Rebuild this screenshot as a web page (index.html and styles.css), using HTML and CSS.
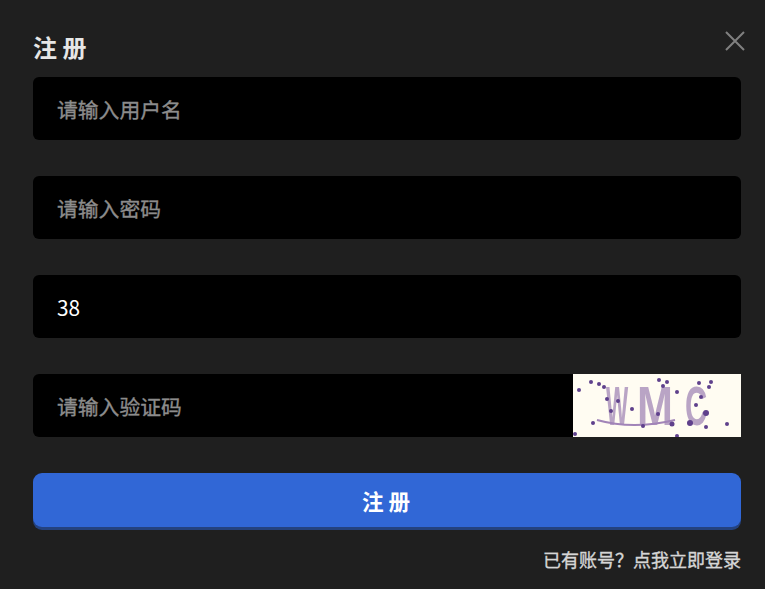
FILE: index.html
```html
<!DOCTYPE HTML>
<html lang="zh-CN">
	<head>
		<meta charset="utf-8">
		<title>注册</title>
		<link rel="stylesheet" href="styles.css">
	</head>
	<body>
		<div class="register-dialog">
			<button class="close-button" type="button" aria-label="关闭">
				<svg width="22" height="22" viewBox="0 0 22 22">
					<path d="M2 2 L20 20 M20 2 L2 20" stroke="#808080" stroke-width="2" fill="none"/>
				</svg>
			</button>

			<h2 class="register-title">注 册</h2>

			<form class="register-form">
				<input class="field" type="text" placeholder="请输入用户名">
				<input class="field" type="text" placeholder="请输入密码">
				<input class="field" type="text" value="38">
				<div class="captcha-row">
					<input class="field" type="text" placeholder="请输入验证码">
					<svg class="captcha" width="168" height="63" viewBox="0 0 168 63">
						<defs>
							<filter id="soften"><feGaussianBlur stdDeviation="0.7"/></filter>
						</defs>
						<rect width="168" height="63" fill="#fffcf2"/>
						<g filter="url(#soften)">
							<g class="captcha-text">
								<text transform="translate(33 50.5) scale(0.42 1)">W</text>
								<text transform="translate(64 50.5) scale(0.77 1)">M</text>
								<text transform="translate(112 50.5) scale(0.55 1)">C</text>
							</g>
							<path d="M24 46 Q60 56 102 46" stroke="#a184b8" stroke-width="2" fill="none"/>
							<g fill="#5e3f8c">
								<circle cx="6" cy="16" r="2"/><circle cx="18" cy="8" r="2"/><circle cx="26" cy="10" r="2"/>
								<circle cx="31" cy="13" r="2"/><circle cx="34" cy="25" r="2"/><circle cx="45" cy="27" r="2"/>
								<circle cx="38" cy="37" r="2"/><circle cx="59" cy="35" r="2"/><circle cx="20" cy="49" r="2"/>
								<circle cx="70" cy="52" r="2"/><circle cx="85" cy="40" r="2"/><circle cx="99" cy="50" r="2.5"/>
								<circle cx="86" cy="6" r="2"/><circle cx="94" cy="8" r="2"/><circle cx="90" cy="12" r="2"/>
								<circle cx="104" cy="18" r="2"/><circle cx="126" cy="9" r="2"/><circle cx="138" cy="8" r="2"/>
								<circle cx="136" cy="13" r="2"/><circle cx="128" cy="23" r="2"/><circle cx="123" cy="31" r="2"/>
								<circle cx="133" cy="39" r="3"/><circle cx="117" cy="49" r="3"/><circle cx="133" cy="53" r="2"/>
								<circle cx="154" cy="50" r="2"/><circle cx="2" cy="60" r="2"/><circle cx="104" cy="62" r="2"/>
							</g>
						</g>
					</svg>
				</div>
				<button class="submit-button" type="button">注 册</button>
			</form>

			<a class="login-link" href="#">已有账号？点我立即登录</a>
		</div>
	</body>
</html>
```

FILE: styles.css
```css
* {
	box-sizing: border-box;
}

html,
body {
	background: #1f1f1f;
	height: 100%;
	margin: 0;
	overflow: hidden;
}

body {
	font-family: "Noto Sans CJK SC", "Noto Sans", sans-serif;
}

.register-dialog {
	padding: 29px 24px 0 33px;
	position: relative;
}

.close-button {
	background: none;
	border: none;
	height: 22px;
	padding: 0;
	position: absolute;
	right: 19px;
	top: 30px;
	width: 22px;
}

.close-button svg {
	display: block;
}

.register-title {
	color: #e6e6e6;
	font-size: 24px;
	font-weight: 700;
	line-height: 36px;
	margin: 0 0 12px;
}

.register-form {
	display: flex;
	flex-direction: column;
	gap: 36px;
}

.field {
	background: #000;
	border: none;
	border-radius: 6px;
	color: #fff;
	display: block;
	font-family: inherit;
	font-size: 20.8px;
	font-weight: 400;
	height: 63px;
	outline: none;
	padding: 0 24px;
	width: 100%;
}

.field::placeholder {
	color: #8c8c8c;
	opacity: 1;
	-webkit-text-stroke: 0.35px #8c8c8c;
}

.captcha-row {
	height: 63px;
	position: relative;
}

.captcha {
	display: block;
	position: absolute;
	right: 0;
	top: 0;
}

.captcha-text {
	fill: #8a6aa6;
	fill-opacity: 0.6;
	font-family: "Liberation Sans", sans-serif;
	font-size: 56px;
	font-weight: 700;
}

.submit-button {
	background: #3167d6;
	border: none;
	border-radius: 9px;
	box-shadow: 0 3px 0 #24427f;
	color: #fff;
	font-family: inherit;
	font-size: 21.6px;
	font-weight: 600;
	height: 54px;
	padding: 0 2px 0 0;
	width: 100%;
}

.login-link {
	color: #d6d6d6;
	display: block;
	font-size: 18px;
	font-weight: 400;
	line-height: 26px;
	margin-top: 19px;
	text-align: right;
	text-decoration: none;
	-webkit-text-stroke: 0.35px #d6d6d6;
}
```
